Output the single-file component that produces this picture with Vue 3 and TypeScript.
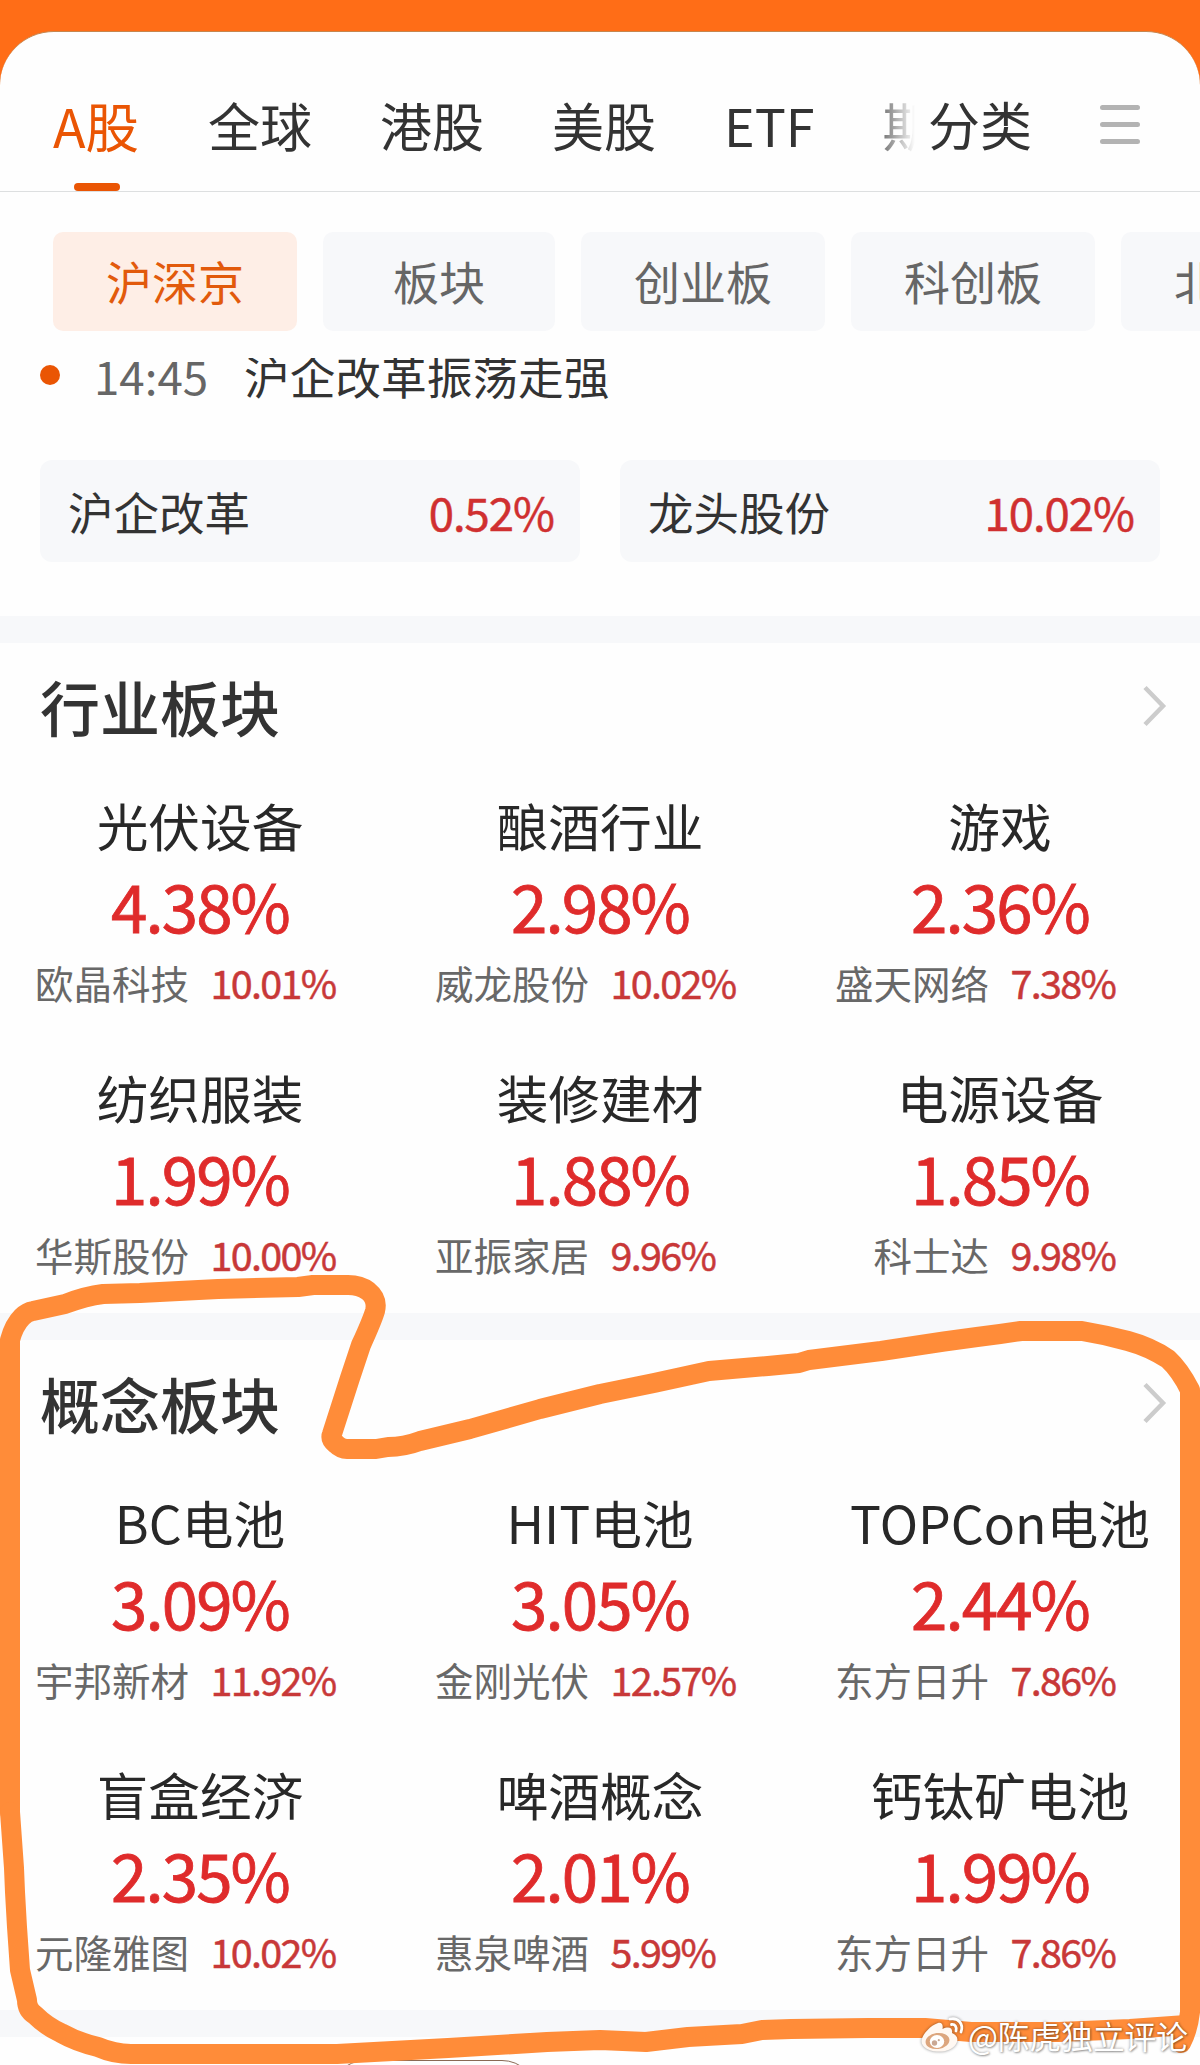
<script setup lang="ts">
interface Sector {
  name: string
  change: string
  stock: string
  stockChange: string
}
interface Section {
  title: string
  sectors: Sector[]
}

const tabs: string[] = ['A股', '全球', '港股', '美股', 'ETF', '期']
const chips: string[] = ['沪深京', '板块', '创业板', '科创板', '北交所']
const quotes = [
  { name: '沪企改革', change: '0.52%' },
  { name: '龙头股份', change: '10.02%' },
]

const sections: Section[] = [
  {
    title: '行业板块',
    sectors: [
      { name: '光伏设备', change: '4.38%', stock: '欧晶科技', stockChange: '10.01%' },
      { name: '酿酒行业', change: '2.98%', stock: '威龙股份', stockChange: '10.02%' },
      { name: '游戏', change: '2.36%', stock: '盛天网络', stockChange: '7.38%' },
      { name: '纺织服装', change: '1.99%', stock: '华斯股份', stockChange: '10.00%' },
      { name: '装修建材', change: '1.88%', stock: '亚振家居', stockChange: '9.96%' },
      { name: '电源设备', change: '1.85%', stock: '科士达', stockChange: '9.98%' },
    ],
  },
  {
    title: '概念板块',
    sectors: [
      { name: 'BC电池', change: '3.09%', stock: '宇邦新材', stockChange: '11.92%' },
      { name: 'HIT电池', change: '3.05%', stock: '金刚光伏', stockChange: '12.57%' },
      { name: 'TOPCon电池', change: '2.44%', stock: '东方日升', stockChange: '7.86%' },
      { name: '盲盒经济', change: '2.35%', stock: '元隆雅图', stockChange: '10.02%' },
      { name: '啤酒概念', change: '2.01%', stock: '惠泉啤酒', stockChange: '5.99%' },
      { name: '钙钛矿电池', change: '1.99%', stock: '东方日升', stockChange: '7.86%' },
    ],
  },
]
</script>

<template>
  <div class="page">
    <main class="sheet">
      <nav class="tabbar">
        <div class="tabs">
          <span v-for="(tab, i) in tabs" :key="tab" class="tab" :class="{ active: i === 0 }">{{ tab }}</span>
        </div>
        <span class="category">分类</span>
        <svg class="menu" width="40" height="40" viewBox="0 0 40 40">
          <path d="M2.5 3.500H37.500M2.500 20.500H37.500M2.500 37.500H37.500" stroke="#b3b3b3" stroke-width="5" stroke-linecap="round" />
        </svg>
      </nav>

      <div class="chips">
        <span v-for="(chip, i) in chips" :key="chip" class="chip" :class="{ selected: i === 0 }">{{ chip }}</span>
      </div>

      <div class="news">
        <i class="dot"></i>
        <span class="time">14:45</span>
        <span class="headline">沪企改革振荡走强</span>
      </div>

      <div class="quotes">
        <div v-for="q in quotes" :key="q.name" class="quote">
          <span>{{ q.name }}</span>
          <span class="quote-change">{{ q.change }}</span>
        </div>
      </div>

      <section v-for="section in sections" :key="section.title" class="section">
        <header class="section-head">
          <h2>{{ section.title }}</h2>
          <svg width="26" height="42" viewBox="0 0 26 42">
            <path d="M3 2.500L21 21L3 39.500" fill="none" stroke="#cccccc" stroke-width="4.500" />
          </svg>
        </header>
        <div class="grid">
          <div v-for="s in section.sectors" :key="s.name" class="cell">
            <div class="name">{{ s.name }}</div>
            <div class="change">{{ s.change }}</div>
            <div class="leader">
              <span class="stock">{{ s.stock }}</span>
              <span class="stock-change">{{ s.stockChange }}</span>
            </div>
          </div>
        </div>
      </section>

      <footer class="next">
        <div class="pill"></div>
      </footer>
    </main>

    <svg class="marker" width="1200" height="2065" viewBox="0 0 1200 2065">
      <path
        d="M10 1812V1340Q14 1325 22 1317Q27 1312 33 1311L65 1304Q86 1296 103 1294L140 1293L218 1289L298 1287L313 1285H348Q360 1285 368 1291Q378 1299 375 1311Q372 1321 361 1345L350 1378L332 1434Q330 1439 336 1444Q341 1449 347 1449H376L388 1447Q404 1447 420 1441L470 1429L540 1409L600 1394L654 1383L709 1371L768 1366L799 1363L809 1360L881 1351L944 1341.500L977 1337L1000 1334L1021 1331H1082Q1106 1335 1128 1341Q1150 1347 1168 1359Q1180 1370 1190 1390V2012Q1188 2030 1181 2043"
      />
      <path
        d="M10 1812L14 1868L15 1892L17 1927L20 1970L27 2000Q27 2010 35 2015Q46 2026 61 2033Q77 2042 98 2047Q114 2054 131 2054H337L448 2048L547 2042L600 2040L646 2042L688 2037L742 2034L762 2030L791 2029L868 2028H925L971 2032H1059L1130 2029L1186 2025"
      />
    </svg>

    <div class="watermark">
      <svg width="42" height="36" viewBox="0 0 42 36">
        <path
          fill="#fff8f2"
          d="M17 6C20 5 22.500 7 21.500 12C27 9.500 32 10 31 16C36 18 38 22 35 27C31 33 24 35 16 34.500C7 34 0.500 30 0.500 24C1 18 9 8.500 17 6Z"
        />
        <ellipse cx="16.500" cy="24" rx="12" ry="8" fill="#dca67e" transform="rotate(-8 16.500 24)" />
        <ellipse cx="16" cy="24.500" rx="7.200" ry="6.400" fill="#fff" />
        <circle cx="13.500" cy="26" r="2.700" fill="#c9a894" />
        <circle cx="17.800" cy="23.200" r="1.100" fill="#c9a894" />
        <path d="M30.500 7.500C34 7 36 10 35 14M29 2C37 0 43 7 40 15" fill="none" stroke="#fff" stroke-width="2.800" stroke-linecap="round" />
      </svg>
      <span>@陈虎独立评论</span>
    </div>
  </div>
</template>

<style>
body {
  margin: 0;
}
</style>

<style scoped>
.page {
  position: relative;
  box-sizing: border-box;
  width: 1200px;
  height: 2065px;
  padding-top: 31px;
  overflow: hidden;
  background: #ff6d17;
  color: #333;
  font-family: 'Noto Sans CJK SC', 'Noto Sans', sans-serif;
}
.sheet {
  box-sizing: border-box;
  height: 2034px;
  overflow: hidden;
  background: #fefefe;
  border-top: 1px solid #c6864f;
  border-radius: 54px 54px 0 0;
}
.tabbar {
  display: flex;
  align-items: center;
  box-sizing: border-box;
  height: 160px;
  padding: 24px 0 0 52px;
  border-bottom: 1px solid #dddfe0;
  font-size: 52px;
  line-height: 137px;
}
.tabs {
  display: flex;
  gap: 68px;
  width: 864px;
  height: 135px;
  margin-right: 12px;
  overflow: hidden;
  white-space: nowrap;
  -webkit-mask-image: linear-gradient(90deg, #000 815px, transparent 863px);
  mask-image: linear-gradient(90deg, #000 815px, transparent 863px);
}
.tab {
  flex: none;
  height: 135px;
}
.tab.active {
  display: flex;
  flex-direction: column;
  align-items: center;
  width: 88px;
  color: #ea5504;
  font-size: 53.500px;
}
.tab.active::after {
  content: '';
  flex: none;
  width: 46px;
  height: 8px;
  margin: -10px 0 0 2px;
  border-radius: 4px;
  background: #ea5504;
}
.category {
  margin-right: 68px;
}
.chips {
  display: flex;
  gap: 26px;
  height: 99px;
  padding: 40px 0 0 53px;
  overflow: hidden;
}
.chip {
  flex: none;
  box-sizing: border-box;
  min-width: 232px;
  padding: 0 53px;
  border-radius: 10px;
  background: #f7f8fa;
  color: #666;
  font-size: 46px;
  line-height: 97px;
  height: 99px;
  text-align: center;
}
.chip.selected {
  background: #feeee6;
  color: #e25a0c;
}
.news {
  display: flex;
  align-items: center;
  height: 52px;
  margin-top: 27px;
  padding-left: 40px;
  overflow: hidden;
  font-size: 45.700px;
  line-height: 52px;
}
.dot {
  width: 20px;
  height: 20px;
  margin-top: -18px;
  border-radius: 50%;
  background: #ea5504;
}
.time {
  width: 150px;
  margin: -18px 0 0 34px;
  color: #666;
}
.headline {
  margin-top: -18px;
}
.quotes {
  display: flex;
  gap: 40px;
  margin-top: 50px;
  padding: 0 40px;
}
.quote {
  flex: 1;
  display: flex;
  justify-content: space-between;
  padding: 0 26px 0 28px;
  border-radius: 12px;
  background: #f7f8fa;
  font-size: 45.500px;
  line-height: 102px;
}
.quote-change {
  color: #d03030;
  letter-spacing: -1px;
  -webkit-text-stroke: 0.500px currentColor;
}
.section {
  height: 670px;
  border-top: 27px solid #f7f8fa;
}
.quotes + .section {
  margin-top: 54px;
}
.section-head {
  display: flex;
  align-items: center;
  justify-content: space-between;
  height: 126px;
  margin-bottom: 21px;
  padding: 0 32px 0 40px;
}
h2 {
  margin: 0;
  font-size: 60px;
  font-weight: 500;
  line-height: 126px;
}
.grid {
  display: grid;
  grid-template-columns: repeat(3, 400px);
  row-gap: 46px;
}
.cell {
  height: 226px;
  text-align: center;
  white-space: nowrap;
}
.name {
  color: #282828;
  font-size: 51.700px;
  line-height: 70px;
}
.change {
  color: #df2b2b;
  font-size: 65.500px;
  line-height: 90px;
  height: 88px;
  letter-spacing: -1.900px;
  -webkit-text-stroke: 0.800px currentColor;
}
.leader {
  display: flex;
  align-items: baseline;
  line-height: 68px;
}
.stock {
  width: 189px;
  color: #686868;
  font-size: 38.500px;
  text-align: right;
}
.stock-change {
  margin-left: 21.500px;
  color: #c83838;
  font-size: 39.500px;
  letter-spacing: -1.700px;
  -webkit-text-stroke: 0.500px currentColor;
}
.next {
  display: flex;
  height: 28px;
  padding-left: 330px;
  border-top: 27px solid #f7f8fa;
}
.pill {
  width: 205px;
  height: 70px;
  margin-top: 23px;
  border: 1px solid #8a6a55;
  border-radius: 35px;
}
.marker {
  position: absolute;
  top: 0;
  left: 0;
  fill: none;
  stroke: #ff8c39;
  stroke-width: 20;
  stroke-linecap: round;
  stroke-linejoin: round;
}
.watermark {
  position: absolute;
  right: 12px;
  bottom: 7px;
  display: flex;
  align-items: center;
  gap: 5px;
  height: 46px;
  color: #fff;
  font-size: 31.700px;
  line-height: 46px;
  white-space: nowrap;
  text-shadow: 0 0 3px rgba(0, 0, 0, 0.400), 1px 1px 2px rgba(0, 0, 0, 0.300);
}
.watermark svg {
  overflow: visible;
  filter: drop-shadow(0 0 1.500px rgba(0, 0, 0, 0.450));
}
</style>
